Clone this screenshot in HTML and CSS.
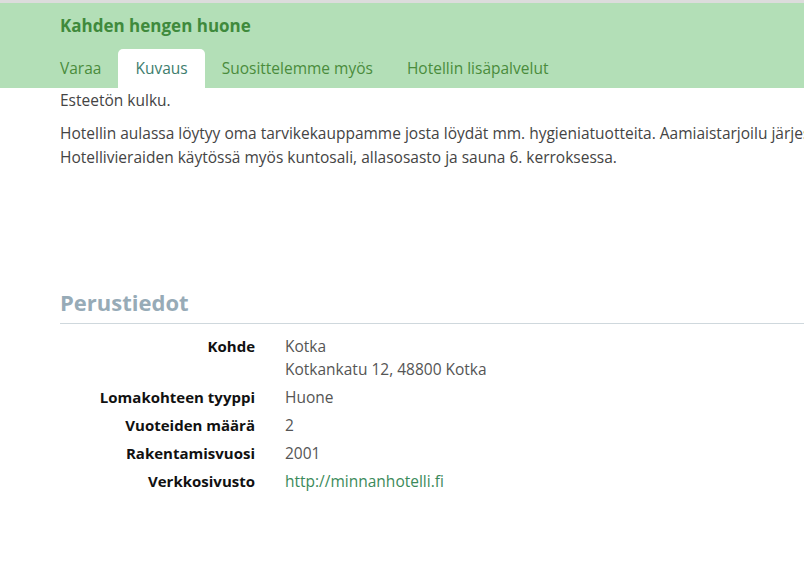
FILE: index.html
```html
<!DOCTYPE html>
<html lang="fi">
<head>
    <meta charset="UTF-8"/>
    <meta name="viewport" content="width=device-width, initial-scale=1"/>
    <title>Kahden hengen huone</title>
    <link rel="stylesheet" href="styles.css">
</head>
<body>

<div class="topbar"></div>

<header class="otsikko">
    <h1>Kahden hengen huone</h1>
    <nav class="valilehdet">
        <a href="#" class="valilehti">Varaa</a>
        <a href="#" class="valilehti aktiivinen">Kuvaus</a>
        <a href="#" class="valilehti">Suosittelemme myös</a>
        <a href="#" class="valilehti">Hotellin lisäpalvelut</a>
    </nav>
</header>

<main class="sisalto">
    <p class="esteeton">Esteetön kulku.</p>
    <p class="kuvaus">Hotellin aulassa löytyy oma tarvikekauppamme josta löydät mm. hygieniatuotteita. Aamiaistarjoilu järjestetään hotellin ravintolassa.<br>Hotellivieraiden käytössä myös kuntosali, allasosasto ja sauna 6. kerroksessa.</p>

    <section class="perustiedot">
        <h2>Perustiedot</h2>
        <dl class="tiedot">
            <dt>Kohde</dt>
            <dd>Kotka<br>Kotkankatu 12, 48800 Kotka</dd>
            <dt>Lomakohteen tyyppi</dt>
            <dd>Huone</dd>
            <dt>Vuoteiden määrä</dt>
            <dd>2</dd>
            <dt>Rakentamisvuosi</dt>
            <dd>2001</dd>
            <dt>Verkkosivusto</dt>
            <dd><a href="#">http://minnanhotelli.fi</a></dd>
        </dl>
    </section>
</main>

</body>
</html>
```

FILE: styles.css
```css
/* RESET */
* {
    margin: 0;
    padding: 0;
    box-sizing: border-box;
}

body {
    font-family: 'Open Sans', sans-serif;
    color: #444;
    background: #fff;
    overflow: hidden;
}

.topbar {
    height: 3px;
    background: #dcdcdc;
}

/* Otsikko ja valilehdet */
.otsikko {
    background: #b3dfb7;
    padding: 0 0 0 60px;
}

.otsikko h1 {
    font-size: 17px;
    font-weight: 700;
    color: #3f8a3c;
    line-height: 44px;
    padding-top: 1px;
}

.valilehdet {
    display: flex;
    margin-left: -17px;
    padding-top: 1px;
}

.valilehti {
    display: block;
    padding: 7px 17px 8px;
    font-size: 15.5px;
    line-height: 24px;
    color: #4a8c3c;
    text-decoration: none;
    border-radius: 5px 5px 0 0;
}

.valilehti.aktiivinen {
    background: #fff;
    color: #3d7d6d;
}

/* Sisalto */
.sisalto {
    padding-left: 60px;
    font-size: 15.5px;
    line-height: 24px;
}

.kuvaus {
    margin-top: 9px;
    white-space: nowrap;
}

.perustiedot {
    margin-top: 118px;
}

.perustiedot h2 {
    font-size: 22px;
    font-weight: 700;
    color: #97abb7;
    line-height: 30px;
    padding-bottom: 6px;
    border-bottom: 1px solid #cfd8dd;
}

.tiedot {
    display: grid;
    grid-template-columns: 195px 1fr;
    column-gap: 30px;
    row-gap: 5px;
    margin-top: 11px;
    line-height: 23px;
}

.tiedot dt {
    text-align: right;
    font-size: 15px;
    font-weight: 700;
    color: #111;
}

.tiedot dd {
    color: #555;
}

.tiedot a {
    color: #3b8a5a;
    text-decoration: none;
}
```
